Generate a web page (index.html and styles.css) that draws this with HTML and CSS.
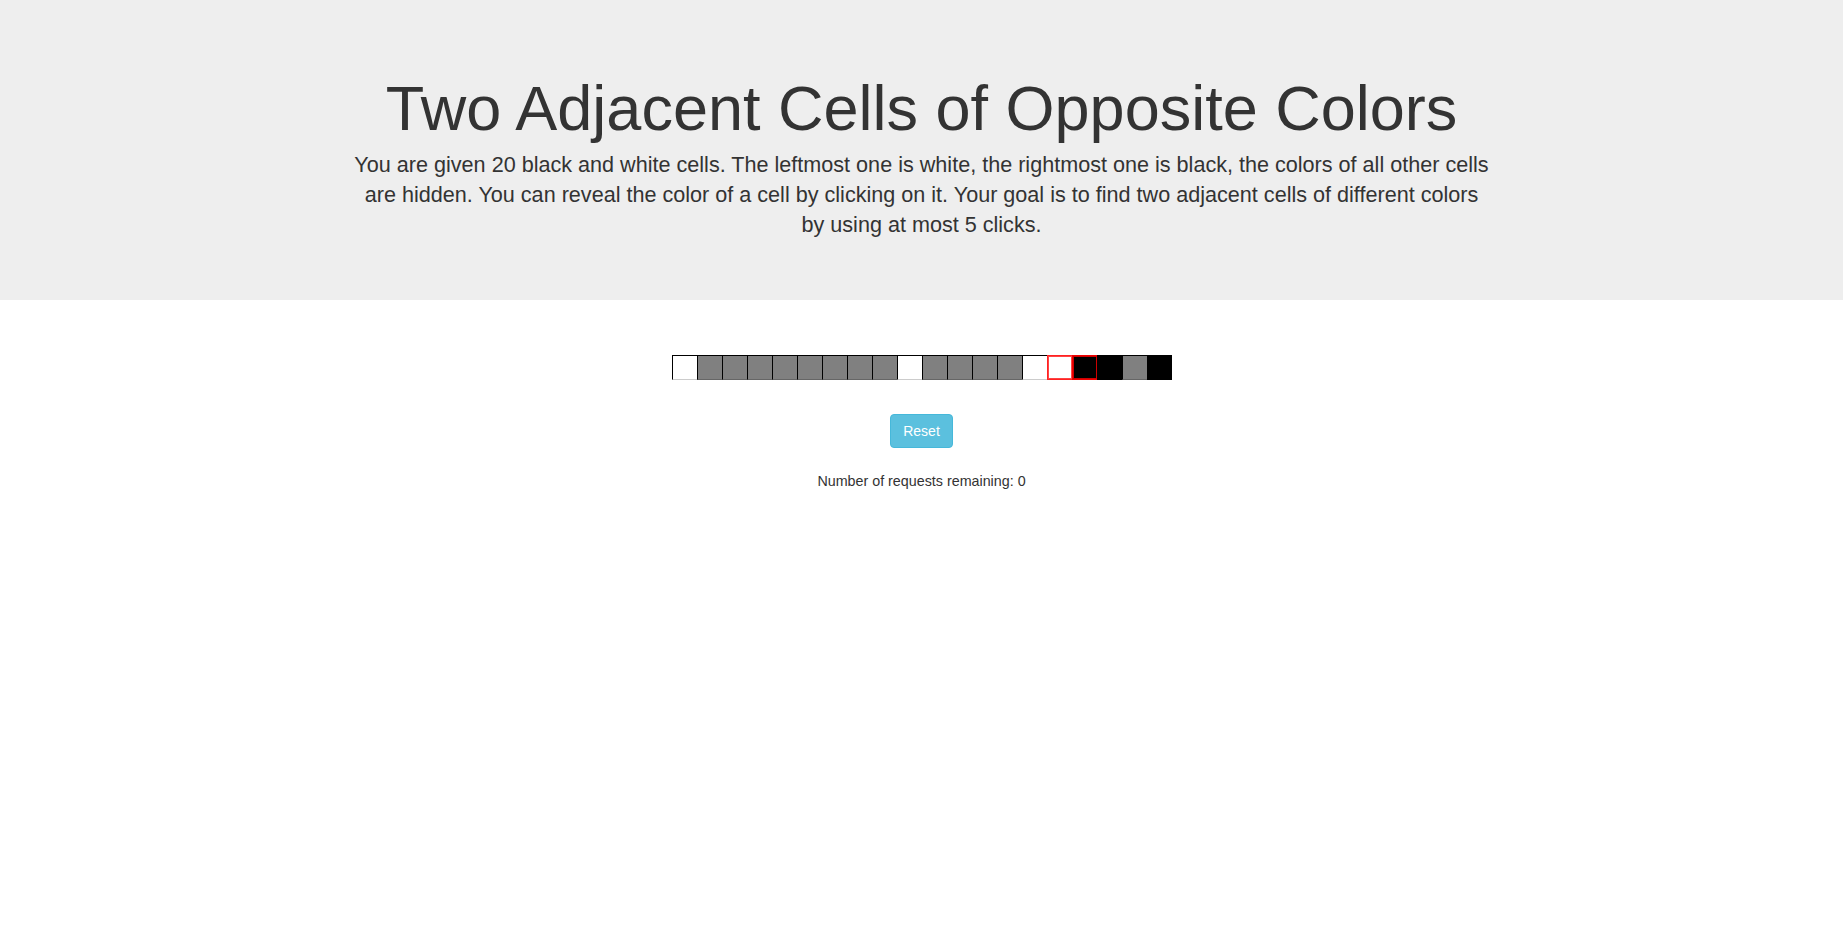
FILE: index.html
```html
<!DOCTYPE html>
<html>
<head>
<meta charset="utf-8">
<title>Two Adjacent Cells of Opposite Colors</title>
<link rel="stylesheet" href="styles.css">
</head>
<body>
<div class="jumbotron">
  <div class="container">
    <h1 class="title">Two Adjacent Cells of Opposite Colors</h1>
    <p class="lead">You are given 20 black and white cells. The leftmost one is white, the rightmost one is black, the colors of all other cells are hidden. You can reveal the color of a cell by clicking on it. Your goal is to find two adjacent cells of different colors by using at most 5 clicks.</p>
  </div>
</div>
<div class="container main">
  <div class="cells">
    <div class="cell white"></div>
    <div class="cell gray"></div>
    <div class="cell gray"></div>
    <div class="cell gray"></div>
    <div class="cell gray"></div>
    <div class="cell gray"></div>
    <div class="cell gray"></div>
    <div class="cell gray"></div>
    <div class="cell gray"></div>
    <div class="cell white"></div>
    <div class="cell gray"></div>
    <div class="cell gray"></div>
    <div class="cell gray"></div>
    <div class="cell gray"></div>
    <div class="cell white"></div>
    <div class="cell white marked-white"></div>
    <div class="cell black marked-black"></div>
    <div class="cell black"></div>
    <div class="cell gray"></div>
    <div class="cell black"></div>
  </div>
  <button class="btn-reset" type="button">Reset</button>
  <p class="remaining">Number of requests remaining: 0</p>
</div>
</body>
</html>
```
FILE: styles.css
```css
* { box-sizing: border-box; }
html, body { margin: 0; padding: 0; }
body {
  font-family: "Liberation Sans", Arial, sans-serif;
  font-size: 14px;
  line-height: 1.42857;
  color: #333;
  background: #fff;
}
.container {
  width: 1170px;
  margin: 0 auto;
  padding: 0 15px;
  text-align: center;
}
.jumbotron {
  background: #eee;
  padding: 48px 0;
}
.title {
  font-size: 63px;
  font-weight: 400;
  line-height: 1.1;
  margin: 26px 0 7px;
  color: #333;
}
.lead {
  font-size: 21.6px;
  line-height: 30px;
  margin: 0 0 12px;
  font-weight: 300;
}
.main {
  padding-top: 55px;
  display: flex;
  flex-direction: column;
  align-items: center;
}
.cells {
  display: flex;
}
.cell {
  width: 25px;
  height: 25px;
  border-left: 1px solid #000;
  border-top: 1px solid #000;
  border-bottom: 1px solid rgba(0,0,0,0.2);
}
.cell.white { background: #fff; }
.cell.gray { background: #808080; }
.cell.black { background: #000; }
.cell.marked-white { box-shadow: inset 0 0 0 1px #f44; border-color: #f22; }
.cell.marked-black { box-shadow: inset 0 0 0 1px #c00; border-color: #e00; }
.btn-reset {
  margin-top: 34px;
  font-family: inherit;
  font-size: 14px;
  line-height: 1.42857;
  padding: 7px 12px 5px;
  color: #fff;
  background: #5bc0de;
  border: 1px solid #46b8da;
  border-radius: 4px;
  cursor: pointer;
}
.remaining {
  font-size: 14.3px;
  margin: 23px 0 0;
}
```
